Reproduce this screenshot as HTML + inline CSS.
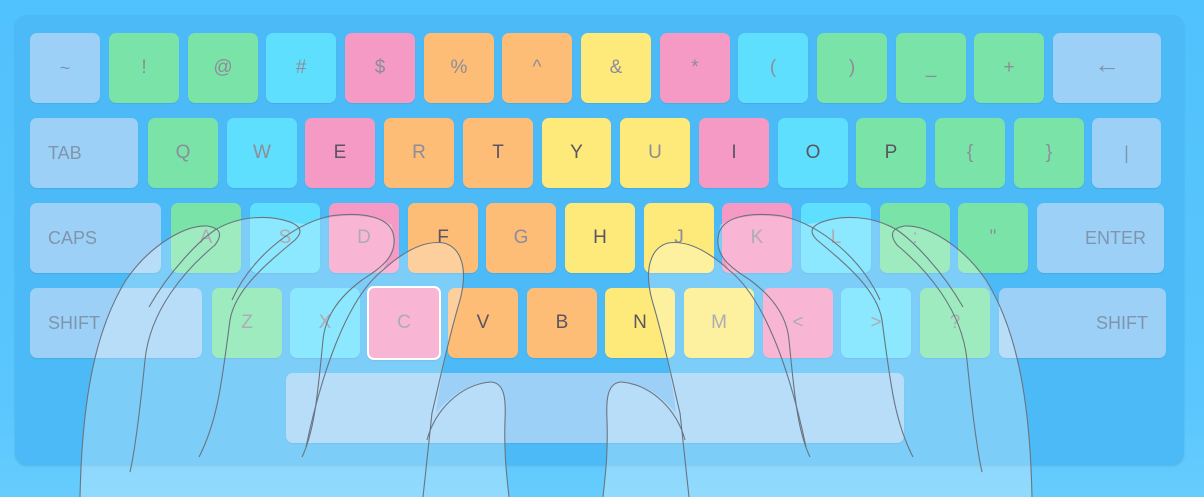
<!DOCTYPE html>
<html><head><meta charset="utf-8"><style>
*{margin:0;padding:0;box-sizing:border-box}
body{width:1204px;height:497px;overflow:hidden;background:linear-gradient(#50c2fd,#5ac6fd 80%,#66ccfd);font-family:"Liberation Sans",sans-serif;position:relative}
.panel{position:absolute;left:15px;top:15px;width:1169px;height:450px;border-radius:12px;background:#4bbaf7;box-shadow:0 1px 2px rgba(0,0,0,.12)}
.k{position:absolute;height:70px;border-radius:7px;display:flex;align-items:center;justify-content:center;font-size:19px;color:#8c8d98;box-shadow:0 1px 1px rgba(0,0,0,.08)}
.g{background:#7ae3a8}.c{background:#5fdffe}.p{background:#f59ac4}.o{background:#fdbd77}.y{background:#fdea7b}.b{background:#9dd0f7;color:#7f95ad;font-size:18px}
.d{color:#5a5560}
.l{justify-content:flex-start;padding-left:18px}.r{justify-content:flex-end;padding-right:18px}
</style></head><body>
<div class="panel"></div>
<div class="k b" style="left:30px;top:33px;width:70px">~</div>
<div class="k g" style="left:109px;top:33px;width:70px">!</div>
<div class="k g" style="left:188px;top:33px;width:70px">@</div>
<div class="k c" style="left:266px;top:33px;width:70px">#</div>
<div class="k p" style="left:345px;top:33px;width:70px">$</div>
<div class="k o" style="left:424px;top:33px;width:70px">%</div>
<div class="k o" style="left:502px;top:33px;width:70px">^</div>
<div class="k y" style="left:581px;top:33px;width:70px">&amp;</div>
<div class="k p" style="left:660px;top:33px;width:70px">*</div>
<div class="k c" style="left:738px;top:33px;width:70px">(</div>
<div class="k g" style="left:817px;top:33px;width:70px">)</div>
<div class="k g" style="left:896px;top:33px;width:70px">_</div>
<div class="k g" style="left:974px;top:33px;width:70px">+</div>
<div class="k b" style="left:1053px;top:33px;width:108px;font-size:26px;padding-bottom:8px">←</div>
<div class="k b l" style="left:30px;top:118px;width:108px">TAB</div>
<div class="k g" style="left:148px;top:118px;width:70px">Q</div>
<div class="k c" style="left:227px;top:118px;width:70px">W</div>
<div class="k p d" style="left:305px;top:118px;width:70px">E</div>
<div class="k o" style="left:384px;top:118px;width:70px">R</div>
<div class="k o d" style="left:463px;top:118px;width:70px">T</div>
<div class="k y d" style="left:542px;top:118px;width:69px">Y</div>
<div class="k y" style="left:620px;top:118px;width:70px">U</div>
<div class="k p d" style="left:699px;top:118px;width:70px">I</div>
<div class="k c d" style="left:778px;top:118px;width:70px">O</div>
<div class="k g d" style="left:856px;top:118px;width:70px">P</div>
<div class="k g" style="left:935px;top:118px;width:70px">{</div>
<div class="k g" style="left:1014px;top:118px;width:70px">}</div>
<div class="k b" style="left:1092px;top:118px;width:69px">|</div>
<div class="k b l" style="left:30px;top:203px;width:131px">CAPS</div>
<div class="k g" style="left:171px;top:203px;width:70px">A</div>
<div class="k c" style="left:250px;top:203px;width:70px">S</div>
<div class="k p" style="left:329px;top:203px;width:70px">D</div>
<div class="k o d" style="left:408px;top:203px;width:70px">F</div>
<div class="k o" style="left:486px;top:203px;width:70px">G</div>
<div class="k y d" style="left:565px;top:203px;width:70px">H</div>
<div class="k y" style="left:644px;top:203px;width:70px">J</div>
<div class="k p" style="left:722px;top:203px;width:70px">K</div>
<div class="k c" style="left:801px;top:203px;width:70px">L</div>
<div class="k g" style="left:880px;top:203px;width:70px">:</div>
<div class="k g" style="left:958px;top:203px;width:70px">"</div>
<div class="k b r" style="left:1037px;top:203px;width:127px">ENTER</div>
<div class="k b l" style="left:30px;top:288px;width:172px">SHIFT</div>
<div class="k g" style="left:212px;top:288px;width:70px">Z</div>
<div class="k c" style="left:290px;top:288px;width:70px">X</div>
<div class="k p" style="left:367px;top:286px;width:74px;height:74px;border:2px solid #fff">C</div>
<div class="k o d" style="left:448px;top:288px;width:70px">V</div>
<div class="k o d" style="left:527px;top:288px;width:70px">B</div>
<div class="k y d" style="left:605px;top:288px;width:70px">N</div>
<div class="k y" style="left:684px;top:288px;width:70px">M</div>
<div class="k p" style="left:763px;top:288px;width:70px">&lt;</div>
<div class="k c" style="left:841px;top:288px;width:70px">&gt;</div>
<div class="k g" style="left:920px;top:288px;width:70px">?</div>
<div class="k b r" style="left:999px;top:288px;width:167px">SHIFT</div>
<div class="k b" style="left:286px;top:373px;width:618px"></div>
<svg style="position:absolute;left:0;top:0" width="1204" height="497">
<defs><g id="h">
<path d="M80,497 C82,400 95,330 126,280 C150,245 185,225 207,226 L215,230 C240,215 270,215 290,222 L305,224 C330,214 370,212 392,225 L394,245 L383,270 C405,250 425,240 444,243 C462,248 468,270 460,300 C448,340 440,380 436,413 C460,385 480,382 494,382 C505,385 506,400 505,420 C504,450 506,470 509,497 Z" fill="rgba(255,255,255,0.28)"/>
<g fill="none" stroke="#6a7480" stroke-width="1.1">
<path d="M80,497 C82,400 95,330 126,280 C150,245 185,225 207,226 C222,228 222,236 215,245 C185,270 150,310 145,360 C140,410 135,450 130,472"/>
<path d="M149,307 C170,270 200,240 215,230 C240,215 270,215 290,222 C305,228 300,235 295,240 C265,265 235,290 230,320 C222,380 218,420 199,457"/>
<path d="M232,300 C250,260 290,225 330,216 C360,212 392,215 394,238 C396,258 380,268 362,280 C335,300 325,320 323,340 C318,390 315,430 302,457"/>
<path d="M306,447 C320,380 345,300 383,270 C405,250 425,240 444,243 C462,248 468,270 460,300 C448,340 440,380 432,413 C428,450 425,480 423,497"/>
<path d="M427,440 C435,410 460,385 490,382 C505,382 506,400 505,420 C504,450 506,470 509,497"/>
</g></g></defs>
<use href="#h"/>
<use href="#h" transform="translate(1112,0) scale(-1,1)"/>
</svg>
</body></html>
